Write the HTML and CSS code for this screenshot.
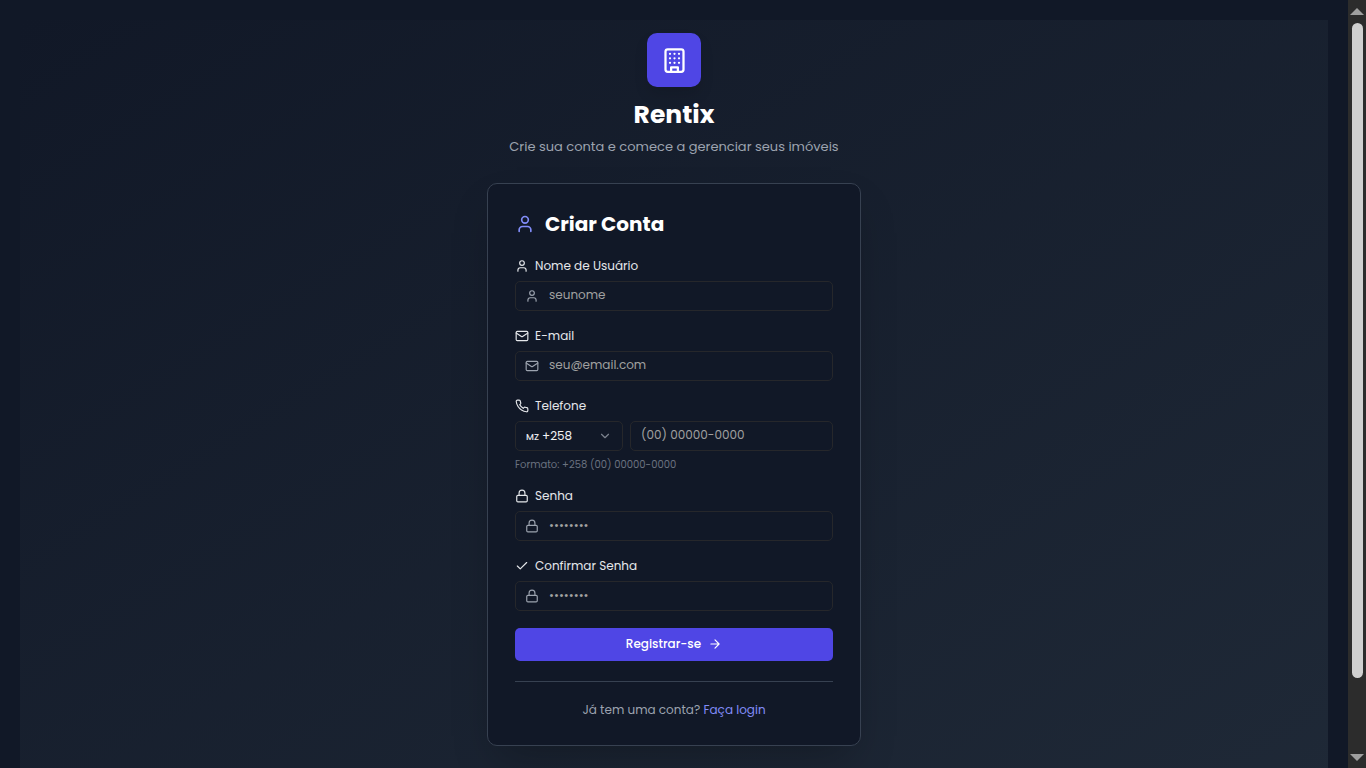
FILE: index.html
```
<!DOCTYPE html>
<html lang="pt">
<head>
<meta charset="utf-8">
<meta name="viewport" content="width=device-width, initial-scale=1">
<title>Rentix</title>
<link rel="stylesheet" href="styles.css">
</head>
<body>
<svg class="sprite" aria-hidden="true">
  <symbol id="user" viewBox="0 0 24 24"><path d="M19 21v-2a4 4 0 0 0-4-4H9a4 4 0 0 0-4 4v2"/><circle cx="12" cy="7" r="4"/></symbol>
  <symbol id="mail" viewBox="0 0 24 24"><rect width="20" height="16" x="2" y="4" rx="2"/><path d="m22 7-8.970 5.700a1.940 1.940 0 0 1-2.060 0L2 7"/></symbol>
  <symbol id="phone" viewBox="0 0 24 24"><path d="M22 16.920v3a2 2 0 0 1-2.180 2 19.790 19.790 0 0 1-8.630-3.070 19.500 19.500 0 0 1-6-6 19.790 19.790 0 0 1-3.070-8.670A2 2 0 0 1 4.110 2h3a2 2 0 0 1 2 1.720 12.840 12.840 0 0 0 .7 2.810 2 2 0 0 1-.45 2.110L8.090 9.910a16 16 0 0 0 6 6l1.270-1.270a2 2 0 0 1 2.110-.45 12.840 12.840 0 0 0 2.810.7A2 2 0 0 1 22 16.920z"/></symbol>
  <symbol id="lock" viewBox="0 0 24 24"><rect width="18" height="11" x="3" y="11" rx="2"/><path d="M7 11V7a5 5 0 0 1 10 0v4"/></symbol>
  <symbol id="check" viewBox="0 0 24 24"><path d="M20 6 9 17l-5-5"/></symbol>
  <symbol id="chevron" viewBox="0 0 24 24"><path d="m6 9 6 6 6-6"/></symbol>
  <symbol id="arrow" viewBox="0 0 24 24"><path d="M5 12h14M12 5l7 7-7 7"/></symbol>
  <symbol id="building" viewBox="0 0 24 24"><rect width="16" height="20" x="4" y="2" rx="2"/><path d="M9 22v-4h6v4M8 6h.01M12 6h.01M16 6h.01M8 10h.01M12 10h.01M16 10h.01M8 14h.01M12 14h.01M16 14h.01"/></symbol>
</svg>
<div class="page">
  <main class="panel">
    <div class="column">
      <header class="brand">
        <div class="logo"><svg class="icon icon-lg"><use href="#building"/></svg></div>
        <h1>Rentix</h1>
        <p>Crie sua conta e comece a gerenciar seus imóveis</p>
      </header>
      <section class="card">
        <h2><svg class="icon icon-md"><use href="#user"/></svg>Criar Conta</h2>
        <form>
          <div class="field">
            <label for="name"><svg class="icon"><use href="#user"/></svg>Nome de Usuário</label>
            <div class="control"><svg class="icon"><use href="#user"/></svg><input id="name" type="text" placeholder="seunome"></div>
          </div>
          <div class="field">
            <label for="email"><svg class="icon"><use href="#mail"/></svg>E-mail</label>
            <div class="control"><svg class="icon"><use href="#mail"/></svg><input id="email" type="email" placeholder="seu@email.com"></div>
          </div>
          <div class="field">
            <label for="tel"><svg class="icon"><use href="#phone"/></svg>Telefone</label>
            <div class="phone-row">
              <div class="control country"><span class="code">MZ</span><select aria-label="Código do país"><option>+258</option></select><svg class="icon"><use href="#chevron"/></svg></div>
              <div class="control number"><input id="tel" type="tel" placeholder="(00) 00000-0000"></div>
            </div>
            <p class="hint">Formato: +258 (00) 00000-0000</p>
          </div>
          <div class="field">
            <label for="pass"><svg class="icon"><use href="#lock"/></svg>Senha</label>
            <div class="control"><svg class="icon"><use href="#lock"/></svg><input class="secret" id="pass" type="password" placeholder="••••••••"></div>
          </div>
          <div class="field">
            <label for="confirm"><svg class="icon"><use href="#check"/></svg>Confirmar Senha</label>
            <div class="control"><svg class="icon"><use href="#lock"/></svg><input class="secret" id="confirm" type="password" placeholder="••••••••"></div>
          </div>
          <button class="submit" type="submit">Registrar-se<svg class="icon"><use href="#arrow"/></svg></button>
        </form>
        <p class="login">Já tem uma conta? <a href="#">Faça login</a></p>
      </section>
    </div>
  </main>
</div>
<div class="rail" aria-hidden="true">
  <svg class="tri" viewBox="0 0 14 7"><path d="M7 0l7 7H0z"/></svg>
  <div class="track"><div class="thumb"></div></div>
  <svg class="tri" viewBox="0 0 14 7"><path d="M0 0h14L7 7z"/></svg>
</div>
</body>
</html>
```
FILE: styles.css
```
* { box-sizing: border-box; margin: 0; }
body {
  display: flex;
  height: 100vh;
  overflow: hidden;
  background: #111827;
  color: #fff;
  font-family: Poppins, Inter, sans-serif;
  font-size: 12px;
  line-height: 18px;
}
.sprite { position: absolute; width: 0; height: 0; }
.page { flex: 1; min-width: 0; padding: 20px; overflow: hidden; }
.panel {
  display: flex;
  justify-content: center;
  padding: 13px 14px 80px;
  background: linear-gradient(to bottom right, #111827, #1f2937);
}
.column { width: 100%; max-width: 374px; }
.icon {
  width: 14px;
  height: 14px;
  flex: none;
  fill: none;
  stroke: currentColor;
  stroke-width: 2;
  stroke-linecap: round;
  stroke-linejoin: round;
}
.icon-md { width: 20px; height: 20px; color: #818cf8; }
.icon-lg { width: 27px; height: 27px; }
.brand { display: flex; flex-direction: column; align-items: center; text-align: center; }
.logo {
  display: grid;
  place-items: center;
  width: 54px;
  height: 54px;
  margin-bottom: 9px;
  border-radius: 10px;
  background: #4f46e5;
  box-shadow: 0 8px 14px rgba(0, 0, 0, .1);
}
h1 { font-size: 25px; line-height: 38px; font-weight: 700; }
.brand p { margin-top: 3px; font-size: 13px; line-height: 20px; color: #9ca3af; }
.card {
  margin-top: 26px;
  padding: 27px 27px 26px;
  border: 1px solid #374151;
  border-radius: 10px;
  background: #111827;
  box-shadow: 0 20px 40px -10px rgba(0, 0, 0, .25);
}
h2 {
  display: flex;
  align-items: center;
  gap: 10px;
  margin-bottom: 20px;
  font-size: 20px;
  line-height: 26px;
  font-weight: 700;
}
form { display: flex; flex-direction: column; gap: 16px; }
label { display: flex; align-items: center; gap: 6px; margin-bottom: 6px; color: #e5e7eb; }
.control {
  display: flex;
  align-items: center;
  gap: 10px;
  height: 30px;
  padding: 0 10px 0 9px;
  border: 1px solid #26272b;
  border-radius: 5px;
  color: #9ca3af;
}
input, select {
  flex: 1;
  min-width: 0;
  padding: 0;
  border: 0;
  outline: 0;
  background: transparent;
  color: #f3f4f6;
  font: inherit;
}
input { padding-bottom: 2px; }
.secret { padding-bottom: 0; }
input::placeholder { color: #a0a0a0; opacity: 1; }
select { appearance: none; }
.phone-row { display: flex; gap: 7px; }
.country { width: 108px; gap: 3px; padding: 0 10px; }
.country .icon { color: #7c828e; }
.code { padding-top: 2px; font-size: 9px; font-weight: 500; color: #e5e7eb; }
.number { flex: 1; min-width: 0; padding: 0 10px; }
.hint { margin-top: 7px; font-size: 10px; line-height: 13px; color: #6b7280; }
.submit {
  display: flex;
  align-items: center;
  justify-content: center;
  gap: 7px;
  height: 33px;
  margin-top: 1px;
  padding: 0 0 1px;
  border: 0;
  border-radius: 5px;
  background: #4f46e5;
  color: #fff;
  font: inherit;
  font-weight: 500;
}
.login {
  margin-top: 20px;
  padding-top: 19px;
  border-top: 1px solid #374151;
  text-align: center;
  color: #9ca3af;
}
.login a { color: #818cf8; text-decoration: none; }
.rail {
  display: flex;
  flex-direction: column;
  align-items: center;
  width: 18px;
  padding: 8px 0 7px;
  background: #2c2c2c;
}
.tri { width: 14px; height: 7px; fill: #9f9f9f; }
.track { flex: 1; width: 11px; padding: 8px 0; }
.thumb { height: 90.6%; border-radius: 6px; background: #d0d0d0; }
```
